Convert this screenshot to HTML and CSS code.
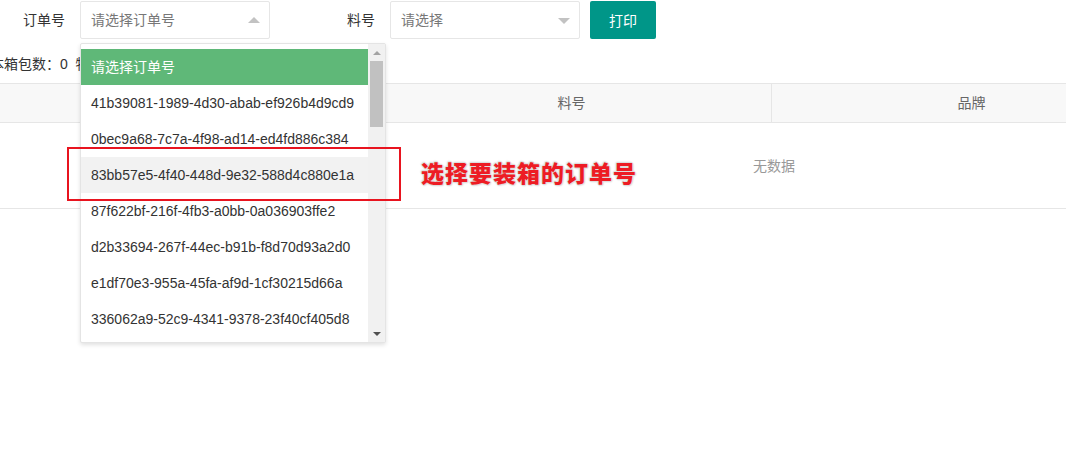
FILE: index.html
```html
<!DOCTYPE html>
<html lang="zh-CN">
<head>
<meta charset="utf-8">
<title>装箱</title>
<link rel="stylesheet" href="styles.css">
</head>
<body>
<div class="page">
  <div class="toolbar">
    <label class="form-label">订单号</label>
    <div class="select select-open">
      <div class="select-input">请选择订单号</div>
      <i class="edge edge-up"></i>
      <div class="dropdown">
        <ul class="options">
          <li class="option option-this">请选择订单号</li>
          <li class="option">41b39081-1989-4d30-abab-ef926b4d9cd9</li>
          <li class="option">0bec9a68-7c7a-4f98-ad14-ed4fd886c384</li>
          <li class="option option-hover">83bb57e5-4f40-448d-9e32-588d4c880e1a</li>
          <li class="option">87f622bf-216f-4fb3-a0bb-0a036903ffe2</li>
          <li class="option">d2b33694-267f-44ec-b91b-f8d70d93a2d0</li>
          <li class="option">e1df70e3-955a-45fa-af9d-1cf30215d66a</li>
          <li class="option">336062a9-52c9-4341-9378-23f40cf405d8</li>
        </ul>
        <div class="scrollbar">
          <div class="sb-btn"><i class="sb-up"></i></div>
          <div class="sb-thumb"></div>
          <div class="sb-track"></div>
          <div class="sb-btn"><i class="sb-down"></i></div>
        </div>
      </div>
    </div>
    <label class="form-label form-label-2">料号</label>
    <div class="select">
      <div class="select-input">请选择</div>
      <i class="edge edge-down"></i>
    </div>
    <button class="btn">打印</button>
  </div>

  <div class="stats">本箱包数：0&nbsp;&nbsp;物</div>

  <div class="table">
    <div class="thead">
      <div class="th"></div>
      <div class="th">料号</div>
      <div class="th">品牌</div>
      <div class="th"></div>
    </div>
    <div class="tbody">
      <div class="none">无数据</div>
    </div>
  </div>

  <div class="mark-box"></div>
  <div class="mark-text">选择要装箱的订单号</div>
</div>
</body>
</html>
```

FILE: styles.css
```css
html, body {
  margin: 0;
  padding: 0;
  background: #fff;
  overflow: hidden;
}

body {
  font-family: "Liberation Sans", "Noto Sans CJK SC", sans-serif;
  font-size: 14px;
  color: #333;
}

.page {
  position: relative;
  width: 1066px;
  height: 471px;
  overflow: hidden;
}

.toolbar {
  display: flex;
  align-items: center;
  padding-top: 1px;
  height: 38px;
}

.form-label {
  box-sizing: border-box;
  width: 80px;
  padding-right: 15px;
  text-align: right;
  line-height: 20px;
  color: #333;
}

.form-label-2 {
  margin-left: 40px;
}

.select {
  position: relative;
  width: 190px;
  height: 38px;
}

.select-input {
  box-sizing: border-box;
  height: 38px;
  border: 1px solid #e6e6e6;
  border-radius: 2px;
  padding-left: 10px;
  line-height: 36px;
  color: #777;
  background: #fff;
}

.edge {
  position: absolute;
  right: 10px;
  width: 0;
  height: 0;
  border-left: 6px solid transparent;
  border-right: 6px solid transparent;
}

.edge-up {
  top: 16px;
  border-bottom: 6px solid #c2c2c2;
}

.edge-down {
  top: 17px;
  border-top: 6px solid #c2c2c2;
}

.btn {
  margin-left: 10px;
  width: 66px;
  height: 38px;
  border: 0;
  border-radius: 2px;
  background: #009688;
  color: #fff;
  font-family: inherit;
  font-size: 14px;
  padding: 0;
  cursor: pointer;
}

.dropdown {
  position: absolute;
  left: 0;
  top: 42px;
  z-index: 10;
  box-sizing: border-box;
  width: 306px;
  height: 300px;
  display: flex;
  background: #fff;
  border: 1px solid #e4e4e4;
  border-radius: 2px;
  box-shadow: 0 2px 4px rgba(0, 0, 0, 0.12);
}

.options {
  flex: 1;
  margin: 0;
  padding: 5px 0;
  list-style: none;
  overflow: hidden;
}

.option {
  height: 36px;
  line-height: 36px;
  padding: 0 10px;
  white-space: nowrap;
  color: #333;
}

.option-this {
  background: #5fb878;
  color: #fff;
}

.option-hover {
  background: #f2f2f2;
}

.scrollbar {
  width: 17px;
  background: #f1f1f1;
  display: flex;
  flex-direction: column;
  align-items: center;
}

.sb-btn {
  width: 17px;
  height: 17px;
  display: flex;
  align-items: center;
  justify-content: center;
}

.sb-up {
  width: 0;
  height: 0;
  border-left: 4px solid transparent;
  border-right: 4px solid transparent;
  border-bottom: 4px solid #a3a3a3;
}

.sb-down {
  width: 0;
  height: 0;
  border-left: 4px solid transparent;
  border-right: 4px solid transparent;
  border-top: 4px solid #505050;
}

.sb-thumb {
  width: 13px;
  height: 66px;
  background: #c1c1c1;
}

.sb-track {
  flex: 1;
}

.stats {
  margin-left: -10px;
  margin-top: 15px;
  line-height: 20px;
  height: 20px;
  white-space: nowrap;
  color: #333;
}

.table {
  margin-left: -10px;
  margin-top: 9px;
  width: 1568px;
  border-top: 1px solid #e6e6e6;
}

.thead {
  display: grid;
  grid-template-columns: 382px 400px 400px 386px;
  background: #f8f8f8;
  border-bottom: 1px solid #e6e6e6;
}

.th {
  box-sizing: border-box;
  height: 38px;
  line-height: 38px;
  text-align: center;
  color: #666;
  border-right: 1px solid #e6e6e6;
}

.tbody {
  height: 85px;
  border-bottom: 1px solid #e6e6e6;
  display: flex;
  align-items: center;
  justify-content: center;
}

.none {
  color: #999;
  line-height: 20px;
}

.mark-box {
  position: absolute;
  left: 67px;
  top: 147px;
  width: 330px;
  height: 50px;
  border: 2px solid #e8141f;
  z-index: 20;
}

.mark-text {
  position: absolute;
  left: 421px;
  top: 156px;
  z-index: 20;
  font-family: "Noto Sans CJK SC", sans-serif;
  font-size: 23px;
  font-weight: 900;
  line-height: 32px;
  letter-spacing: 1px;
  color: #ed1c24;
  text-shadow: 1px 0 1px #ddd, -1px 0 1px #ddd, 0 1px 1px #ddd, 0 -1px 1px #ddd, 1px 1px 2px #e0e0e0, -1px -1px 2px #e0e0e0;
}
```
